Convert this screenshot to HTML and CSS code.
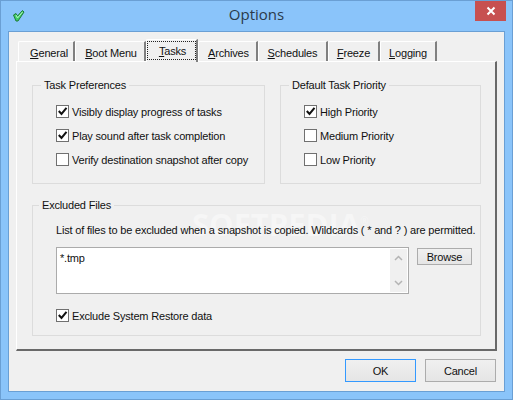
FILE: index.html
```html
<!DOCTYPE html>
<html lang="en">
<head>
    <meta charset="UTF-8">
    <title>Options</title>
    <link rel="stylesheet" href="styles.css">
</head>
<body>
    <div class="window">
        <div class="titlebar">
            <svg class="app-icon" width="12" height="12" viewBox="0 0 12 12">
                <path d="M0.5 5 L3 3.5 L4.5 6 L9.5 0.5 L11 2 L5 11 L3 11 Z" fill="#3fcf68" stroke="#1f7a3a" stroke-width="1"/>
                <path d="M3 5 L4.5 8 L9.5 2" fill="none" stroke="#b4f5c4" stroke-width="1"/>
            </svg>
            <span class="title">Options</span>
            <div class="close-btn">
                <svg width="10" height="10" viewBox="0 0 10 10">
                    <path d="M1.5 1.5 L8.5 8.5 M8.5 1.5 L1.5 8.5" stroke="#fff" stroke-width="2"/>
                </svg>
            </div>
        </div>
        <div class="content">
            <div class="tabs">
                <div class="tab tab-general"><u>G</u>eneral</div>
                <div class="tab tab-boot"><u>B</u>oot Menu</div>
                <div class="tab tab-tasks active"><span class="focus"><u>T</u>asks</span></div>
                <div class="tab tab-archives"><u>A</u>rchives</div>
                <div class="tab tab-schedules"><u>S</u>chedules</div>
                <div class="tab tab-freeze"><u>F</u>reeze</div>
                <div class="tab tab-logging"><u>L</u>ogging</div>
            </div>
            <div class="panel">
                <div class="top-row">
                    <fieldset class="group group-prefs">
                        <legend>Task Preferences</legend>
                        <div class="check"><span class="box"><svg width="11" height="11" viewBox="0 0 11 11"><path d="M1.8 5 L4.5 8 L9.5 1.8" fill="none" stroke="#111" stroke-width="2"/></svg></span>Visibly display progress of tasks</div>
                        <div class="check"><span class="box"><svg width="11" height="11" viewBox="0 0 11 11"><path d="M1.8 5 L4.5 8 L9.5 1.8" fill="none" stroke="#111" stroke-width="2"/></svg></span>Play sound after task completion</div>
                        <div class="check"><span class="box"></span>Verify destination snapshot after copy</div>
                    </fieldset>
                    <fieldset class="group group-priority">
                        <legend>Default Task Priority</legend>
                        <div class="check"><span class="box"><svg width="11" height="11" viewBox="0 0 11 11"><path d="M1.8 5 L4.5 8 L9.5 1.8" fill="none" stroke="#111" stroke-width="2"/></svg></span>High Priority</div>
                        <div class="check"><span class="box"></span>Medium Priority</div>
                        <div class="check"><span class="box"></span>Low Priority</div>
                    </fieldset>
                </div>
                <fieldset class="group group-excluded">
                    <legend>Excluded Files</legend>
                    <p class="hint">List of files to be excluded when a snapshot is copied. Wildcards ( * and ? ) are permitted.</p>
                    <div class="file-row">
                        <div class="file-list">
                            <span class="file-text">*.tmp</span>
                            <div class="scrollbar">
                                <svg width="9" height="6" viewBox="0 0 9 6"><path d="M1 5 L4.5 1.5 L8 5" fill="none" stroke="#b4b4b4" stroke-width="1.5"/></svg>
                                <svg width="9" height="6" viewBox="0 0 9 6"><path d="M1 1 L4.5 4.5 L8 1" fill="none" stroke="#b4b4b4" stroke-width="1.5"/></svg>
                            </div>
                        </div>
                        <button class="btn btn-browse">Browse</button>
                    </div>
                    <div class="check check-restore"><span class="box"><svg width="11" height="11" viewBox="0 0 11 11"><path d="M1.8 5 L4.5 8 L9.5 1.8" fill="none" stroke="#111" stroke-width="2"/></svg></span>Exclude System Restore data</div>
                </fieldset>
            </div>
            <div class="footer">
                <button class="btn btn-main btn-default">OK</button>
                <button class="btn btn-main">Cancel</button>
            </div>
        </div>
        <div class="watermark">SOFTPEDIA<sup>®</sup></div>
    </div>
</body>
</html>
```

FILE: styles.css
```css
* {
    box-sizing: border-box;
}

html, body {
    margin: 0;
    padding: 0;
}

body {
    width: 513px;
    height: 400px;
    overflow: hidden;
    font-family: "Liberation Sans", Arial, sans-serif;
    font-size: 11px;
    line-height: 13px;
    letter-spacing: -0.18px;
    color: #111;
}

.window {
    position: relative;
    width: 513px;
    height: 400px;
    background-color: #8ac4fa;
    border: 1px solid #6a9fd4;
    padding: 0 7px 7px 7px;
    display: flex;
    flex-direction: column;
}

.titlebar {
    height: 30px;
    display: flex;
    align-items: center;
    justify-content: center;
    position: relative;
}

.app-icon {
    position: absolute;
    left: 5px;
    top: 9px;
}

.title {
    font-family: "Open Sans", sans-serif;
    font-size: 15px;
    letter-spacing: 0;
    color: #2b3a4a;
    margin-top: -3px;
}

.close-btn {
    position: absolute;
    right: -1px;
    top: 0;
    width: 31px;
    height: 20px;
    background-color: #c75050;
    display: flex;
    align-items: center;
    justify-content: center;
}

.content {
    flex: 1;
    background-color: #f0f0f0;
    border: 1px solid #6a9fd4;
    padding: 9px 7px 0 7px;
    display: flex;
    flex-direction: column;
}

/* tabs */
.tabs {
    display: flex;
    height: 20px;
    padding-left: 2px;
    position: relative;
    z-index: 1;
}

.tab {
    height: 20px;
    padding-top: 5px;
    text-align: center;
    border-top: 1px solid #fff;
    border-left: 1px solid #fff;
    border-right: 2px solid #808080;
    border-top-left-radius: 2px;
    white-space: nowrap;
}

.tab-general { width: 57px; padding-left: 6px; }
.tab-boot { width: 71px; padding-left: 2px; }
.tab-archives { width: 60px; padding-left: 2px; }
.tab-schedules { width: 70px; }
.tab-freeze { width: 52px; }
.tab-logging { width: 57px; }

.tab.active {
    width: 52px;
    height: 23px;
    margin-top: -2px;
    padding: 1px 0 0 0;
    background-color: #f0f0f0;
}

.focus {
    display: block;
    height: 19px;
    padding: 3px 0 0 2px;
    border: 1px dotted #222;
}

/* main panel */
.panel {
    height: 290px;
    border-top: 1px solid #fff;
    border-left: 1px solid #fff;
    border-right: 2px solid #696969;
    border-bottom: 2px solid #696969;
    padding: 16px 14px 0 15px;
}

.top-row {
    display: flex;
    justify-content: space-between;
}

.group {
    margin: 0;
    min-width: 0;
    border: 1px solid #dcdcdc;
    padding: 0;
}

.group legend {
    margin-left: -15px;
    padding: 0 3px;
    line-height: 15px;
}

.group-prefs {
    width: 233px;
    height: 106px;
    padding: 6px 0 0 23px;
}

.group-priority {
    width: 201px;
    height: 106px;
    padding: 6px 0 0 23px;
}

.group-excluded {
    width: 449px;
    height: 138px;
    margin-top: 14px;
    padding: 0 0 0 23px;
}

.group-excluded legend {
    margin-left: -17px;
}

.check {
    display: flex;
    align-items: flex-start;
    height: 24px;
    padding-top: 6px;
    line-height: 15px;
}

.box {
    display: block;
    width: 13px;
    height: 13px;
    margin-right: 3px;
    border: 1px solid #707070;
    background-color: #fff;
}

.box svg {
    display: block;
}

.hint {
    position: relative;
    z-index: 1;
    margin: 11px 0 10px 0;
    white-space: nowrap;
}

.file-row {
    display: flex;
    align-items: flex-start;
}

.file-list {
    width: 353px;
    height: 47px;
    border: 1px solid #ababab;
    background-color: #fff;
    display: flex;
    justify-content: space-between;
}

.file-text {
    margin: 4px 0 0 3px;
}

.scrollbar {
    width: 17px;
    margin: 1px 1px 1px 0;
    background-color: #f0f0f0;
    display: flex;
    flex-direction: column;
    align-items: center;
    justify-content: space-between;
    padding: 6px 0;
}

.btn {
    font-family: "Liberation Sans", Arial, sans-serif;
    font-size: 11px;
    letter-spacing: -0.18px;
    color: #111;
    padding: 0;
    border: 1px solid #acacac;
    background: linear-gradient(#f0f0f0, #e5e5e5);
}

.btn-browse {
    width: 55px;
    height: 17px;
    margin: 1px 0 0 8px;
}

.check-restore {
    margin-top: 9px;
}

.footer {
    display: flex;
    justify-content: flex-end;
    gap: 9px;
    padding: 8px 1px 0 0;
}

.btn-main {
    width: 71px;
    height: 23px;
}

.btn-default {
    border-color: #3399ff;
}

.watermark {
    position: absolute;
    left: 191px;
    top: 203px;
    font-family: "Open Sans", sans-serif;
    font-size: 31px;
    line-height: 40px;
    font-weight: 700;
    letter-spacing: 0;
    color: #fff;
    opacity: 0.4;
    pointer-events: none;
}

.watermark sup {
    font-size: 10px;
    line-height: 0;
    font-weight: 400;
}
```
